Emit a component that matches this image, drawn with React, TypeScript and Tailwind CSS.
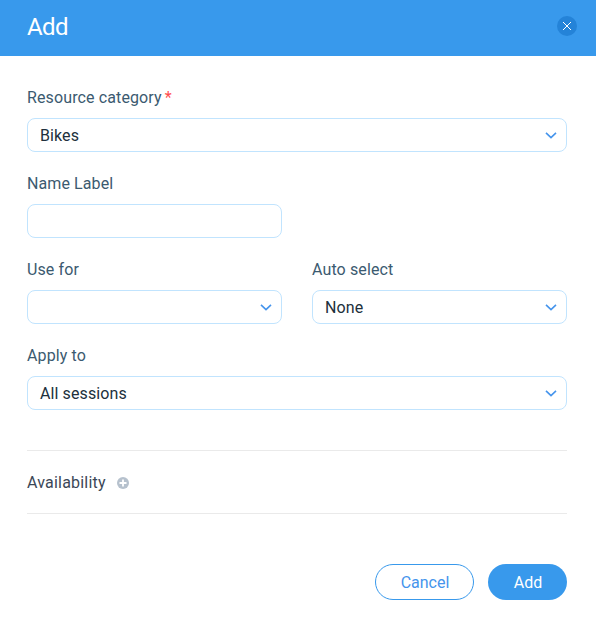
import React from "react";

function Chevron() {
  return (
    <svg className="h-3 w-3 shrink-0" viewBox="0 0 12 12" fill="none" stroke="#4594ec" strokeWidth="1.6">
      <path d="M1 3.8L6 8.6L11 3.8" />
    </svg>
  );
}

function Select({ label, value, required }: { label: string; value?: string; required?: boolean }) {
  return (
    <div className="h-[86px]">
      <div className="h-8 text-base leading-6 tracking-[0.12px] text-[#3b5a70]">
        {label}
        {required && <span className="ml-[3px] text-[#ff4d4d]">*</span>}
      </div>
      <button className="flex h-[34px] w-full items-center justify-between rounded-lg border border-[#c1e4fe] bg-white pr-[9px] pl-3 text-left text-base tracking-[0.1px] text-[#20303c]">
        <span className="pt-[2px]">{value}</span>
        <Chevron />
      </button>
    </div>
  );
}

export default function App() {
  return (
    <div className="h-[628px] w-[596px] overflow-hidden bg-white font-['Roboto',sans-serif]">
      <header className="flex h-14 items-center justify-between bg-[#3899ec] pr-[19px] pl-[27px] text-white">
        <h1 className="pb-[2px] text-2xl leading-8 tracking-[-0.6px]">Add</h1>
        <button className="mb-1 flex h-5 w-5 items-center justify-center rounded-full bg-[#2483d8]">
          <svg className="h-2 w-2" viewBox="0 0 8 8" stroke="white">
            <path d="M0 0L8 8M8 0L0 8" />
          </svg>
        </button>
      </header>
      <main className="pt-[30px] pr-[29px] pl-[27px]">
        <Select label="Resource category" value="Bikes" required />
        <div className="h-[86px]">
          <div className="h-8 text-base leading-6 tracking-[0.1px] text-[#3b5a70]">Name Label</div>
          <input className="h-[34px] w-[255px] rounded-lg border border-[#c1e4fe] px-3 outline-none" />
        </div>
        <div className="grid grid-cols-2 gap-[30px]">
          <Select label="Use for" />
          <Select label="Auto select" value="None" />
        </div>
        <Select label="Apply to" value="All sessions" />
        <section className="mt-5 flex h-16 items-center border-y border-[#eaeaea] text-base tracking-[0.2px] text-[#3b4757]">
          <span className="pt-[2px]">Availability</span>
          <svg className="mt-[2px] ml-[11px] h-3 w-3" viewBox="0 0 12 12">
            <circle cx="6" cy="6" r="6" fill="#b6c1cd" />
            <path d="M6 2.5V9.5M2.5 6H9.5" stroke="white" strokeWidth="1.8" />
          </svg>
        </section>
        <footer className="mt-[50px] flex justify-end gap-[14px]">
          <button className="h-9 w-[99px] rounded-full border border-[#3899ec] pt-[2px] pl-px text-base text-[#4594ec]">Cancel</button>
          <button className="h-9 w-[79px] rounded-full bg-[#3899ec] pt-[2px] pl-px text-base text-white">Add</button>
        </footer>
      </main>
    </div>
  );
}
